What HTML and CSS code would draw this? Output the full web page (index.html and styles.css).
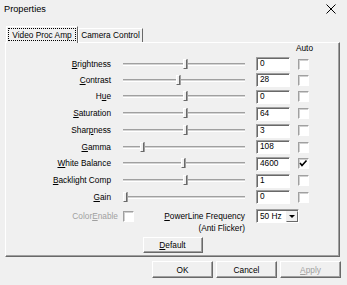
FILE: index.html
```html
<!DOCTYPE html>
<html lang="en">

<head>
  <meta charset="UTF-8">
  <title>Properties</title>
  <link rel="stylesheet" href="styles.css">
</head>

<body>
  <div class="dialog">
    <div class="titlebar">
      <span class="title">Properties</span>
      <svg class="close" width="10" height="10" viewBox="0 0 10 10">
        <path d="M0.5 0.5 L9.5 9.5 M9.5 0.5 L0.5 9.5" stroke="#000" stroke-width="1" fill="none"/>
      </svg>
    </div>

    <div class="sheet">
      <div class="tabs">
        <div class="tab active"><span class="focus">Video Proc Amp</span></div>
        <div class="tab">Camera Control</div>
      </div>

      <div class="panel">
        <div class="controls">
          <span class="auto-head">Auto</span>

          <span class="label"><u>B</u>rightness</span>
          <div class="slider"><i class="thumb" style="left:60px"></i></div>
          <div class="edit">0</div>
          <span class="check"></span>

          <span class="label"><u>C</u>ontrast</span>
          <div class="slider"><i class="thumb" style="left:53px"></i></div>
          <div class="edit">28</div>
          <span class="check"></span>

          <span class="label">H<u>u</u>e</span>
          <div class="slider"><i class="thumb" style="left:60px"></i></div>
          <div class="edit">0</div>
          <span class="check"></span>

          <span class="label"><u>S</u>aturation</span>
          <div class="slider"><i class="thumb" style="left:60px"></i></div>
          <div class="edit">64</div>
          <span class="check"></span>

          <span class="label">Shar<u>p</u>ness</span>
          <div class="slider"><i class="thumb" style="left:60px"></i></div>
          <div class="edit">3</div>
          <span class="check"></span>

          <span class="label"><u>G</u>amma</span>
          <div class="slider"><i class="thumb" style="left:17px"></i></div>
          <div class="edit">108</div>
          <span class="check"></span>

          <span class="label"><u>W</u>hite Balance</span>
          <div class="slider"><i class="thumb" style="left:58px"></i></div>
          <div class="edit">4600</div>
          <span class="check checked">
            <svg width="9" height="9" viewBox="0 0 9 9"><path d="M1 4 L3 6.5 L7.5 1.5" stroke="#000" stroke-width="1.6" fill="none"/></svg>
          </span>

          <span class="label"><u>B</u>acklight Comp</span>
          <div class="slider"><i class="thumb" style="left:60px"></i></div>
          <div class="edit">1</div>
          <span class="check"></span>

          <span class="label"><u>G</u>ain</span>
          <div class="slider"><i class="thumb" style="left:0px"></i></div>
          <div class="edit">0</div>
          <span class="check"></span>
        </div>

        <div class="extras">
          <span class="color-label">Color<u>E</u>nable</span>
          <span class="check"></span>
          <span class="power-label"><u>P</u>owerLine Frequency<br>(Anti Flicker)</span>
          <div class="select">
            <span class="select-value">50 Hz</span>
            <span class="select-btn"><i class="arrow"></i></span>
          </div>
        </div>

        <div class="default-row">
          <button class="btn"><u>D</u>efault</button>
        </div>
      </div>
    </div>

    <div class="actions">
      <button class="btn">OK</button>
      <button class="btn">Cancel</button>
      <button class="btn disabled"><u>A</u>pply</button>
    </div>
  </div>
</body>

</html>
```

FILE: styles.css
```css
* {
  margin: 0;
  padding: 0;
  box-sizing: border-box;
}

body {
  background-color: #f0f0f0;
  font-family: "Liberation Sans", Arial, sans-serif;
  font-size: 8.3px;
  color: #000;
}

u {
  text-decoration: underline;
}

.dialog {
  width: 347px;
  height: 285px;
}

/* title bar */
.titlebar {
  height: 24px;
  display: flex;
  justify-content: space-between;
  align-items: flex-start;
  padding: 4px 11px 0 4px;
}

.title {
  font-size: 9.2px;
  line-height: 11px;
}

.close {
  display: block;
}

/* tabs */
.sheet {
  width: 335px;
  margin: 2px 0 0 5px;
}

.tabs {
  display: flex;
  height: 16px;
  align-items: flex-end;
}

.tab {
  width: 65px;
  height: 14px;
  border: 1px solid;
  border-color: #fff #696969 transparent #fff;
  border-bottom: 0;
  text-align: center;
  line-height: 12px;
  white-space: nowrap;
}

.tab.active {
  width: 72px;
  height: 17px;
  margin: 0 0 -1px 1px;
  padding: 1px 1px 0;
  position: relative;
  z-index: 1;
  background-color: #f0f0f0;
}

.focus {
  display: block;
  height: 13px;
  line-height: 12px;
  border: 1px dotted #000;
}

/* panel */
.panel {
  height: 215px;
  border: 1px solid;
  border-color: #fff #696969 #696969 #fff;
  box-shadow: inset -1px -1px #a0a0a0;
}

.controls {
  display: grid;
  grid-template-columns: 105px 134px 45px 19px;
  grid-template-rows: 13px 16px 16px 17px 17px 17px 16px 17px 17px 16px;
  align-items: center;
}

.auto-head {
  grid-column: 4;
  justify-self: end;
  align-self: start;
  margin-right: -4px;
  line-height: 11px;
}

.label {
  text-align: right;
  white-space: nowrap;
  line-height: 11px;
}

.slider {
  justify-self: end;
  width: 122px;
  height: 3px;
  position: relative;
  border-top: 1px solid #a0a0a0;
  border-bottom: 1px solid #fff;
  background-color: #d4d4d4;
}

.thumb {
  position: absolute;
  top: -5px;
  width: 4px;
  height: 10px;
  background-color: #f0f0f0;
  border: 1px solid;
  border-color: #fff #696969 #696969 #fff;
  box-shadow: 1px 0 #a0a0a0;
}

.edit {
  justify-self: end;
  width: 34px;
  height: 14px;
  padding-left: 3px;
  line-height: 11px;
  background-color: #fff;
  border: 1px solid;
  border-color: #a0a0a0 #fff #fff #a0a0a0;
  box-shadow: inset 1px 1px #696969;
}

.check {
  justify-self: end;
  width: 11px;
  height: 11px;
  background-color: #fff;
  border: 1px solid;
  border-color: #a0a0a0 #fff #fff #a0a0a0;
  box-shadow: inset 1px 1px #d0d0d0;
  display: flex;
  align-items: center;
  justify-content: center;
}

/* colorenable / powerline */
.extras {
  display: flex;
  align-items: flex-start;
  height: 29px;
  padding-top: 5px;
  line-height: 12px;
}

.color-label {
  width: 112px;
  text-align: right;
  color: #a0a0a0;
}

.extras .check {
  margin: 1px 0 0 5px;
}

.power-label {
  width: 100px;
  margin-left: 11px;
  text-align: right;
  white-space: nowrap;
}

.select {
  display: flex;
  width: 43px;
  height: 14px;
  margin: -1px 0 0 11px;
  background-color: #fff;
  border: 1px solid;
  border-color: #a0a0a0 #fff #fff #a0a0a0;
  box-shadow: inset 1px 1px #696969;
}

.select-value {
  flex: 1;
  padding: 1px 0 0 3px;
  line-height: 10px;
}

.select-btn {
  width: 12px;
  height: 11px;
  margin: 1px 0 0 0;
  background-color: #f0f0f0;
  border: 1px solid;
  border-color: #f0f0f0 #696969 #696969 #f0f0f0;
  display: flex;
  align-items: center;
  justify-content: center;
}

.arrow {
  width: 0;
  height: 0;
  border-left: 3px solid transparent;
  border-right: 3px solid transparent;
  border-top: 3px solid #000;
}

/* buttons */
.default-row {
  display: flex;
  justify-content: center;
  margin-top: 3px;
}

.btn {
  width: 60px;
  height: 16px;
  font: inherit;
  line-height: 12px;
  color: #000;
  background-color: #f0f0f0;
  border: 1px solid;
  border-color: #fff #696969 #696969 #fff;
  box-shadow: inset -1px -1px #a0a0a0;
}

.actions {
  display: flex;
  justify-content: flex-end;
  gap: 3px;
  margin-top: 4px;
  padding-right: 6px;
}

.actions .btn {
  width: 61px;
  height: 17px;
}

.btn.disabled {
  color: #a0a0a0;
}
```
